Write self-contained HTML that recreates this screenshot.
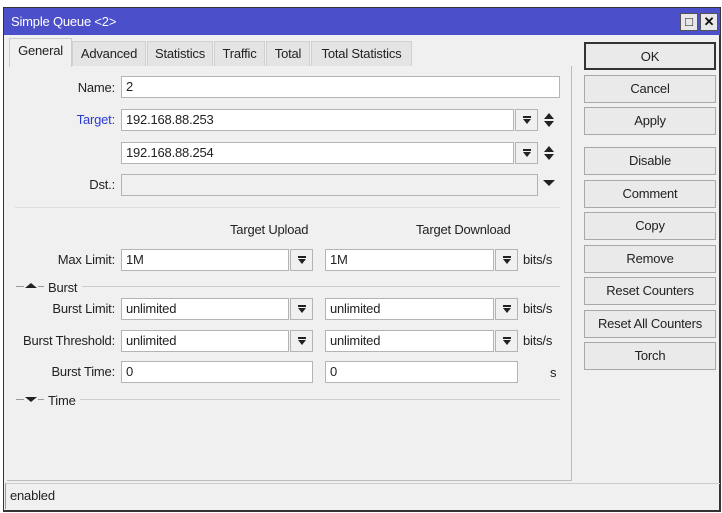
<!DOCTYPE html>
<html><head><meta charset="utf-8"><style>
*{box-sizing:border-box;margin:0;padding:0}
body{width:722px;height:513px;background:#fff;font-family:"Liberation Sans",sans-serif;font-size:13px;letter-spacing:-0.2px;color:#222;position:relative;overflow:hidden}
.a{position:absolute}
.win{left:3px;top:7px;width:718px;height:505px;background:#f0f0f0;border:1px solid #333;border-right:2px solid #333;border-bottom:2px solid #333}
.title{left:4px;top:8px;width:716px;height:27px;background:#4b4fc9;color:#fff;font-size:13px;line-height:27px;padding-left:7px}
.tb{width:18px;height:18px;top:13px;background:#e8e8e8;border:1px solid #555;font-size:13px;line-height:16px;text-align:center;color:#111;font-weight:bold}
.tab{top:41px;height:25px;background:#e4e4e4;border:1px solid #d0d0d0;border-bottom:none;line-height:24px;text-align:center;font-size:13px}
.panel{left:7px;top:66px;width:565px;height:415px;border-right:1px solid #bbb;border-bottom:1px solid #bbb}
.lbl{text-align:right;width:110px;left:5px;line-height:22px}
.in{background:#fff;border:1px solid #b4b4b4;height:22px;line-height:20px;padding-left:4px}
.gr{background:#f0f0f0}
.dd{width:23px;height:22px;border:1px solid #b4b4b4;background:#f0f0f0}
.dd:after{content:"";position:absolute;left:7px;top:6px;width:8px;height:2px;background:#222}
.dd:before{content:"";position:absolute;left:7px;top:9px;border-left:4px solid transparent;border-right:4px solid transparent;border-top:5px solid #222}
.btn{left:584px;width:132px;height:28px;border:1px solid #a8a8a8;background:#eaeaea;text-align:center;line-height:26px;font-size:13px}
.line{height:1px;background:#ccc}
.u{line-height:22px}
</style></head><body>
<div class="a win"></div>
<div class="a title">Simple Queue &lt;2&gt;</div>
<div class="a tb" style="left:680px">&#9633;</div>
<div class="a tb" style="left:700px">✕</div>

<div class="a tab" style="left:9px;top:38px;width:63px;height:29px;background:#f0f0f0;border-color:#ccc">General</div>
<div class="a tab" style="left:72px;width:74px">Advanced</div>
<div class="a tab" style="left:147px;width:66px">Statistics</div>
<div class="a tab" style="left:214px;width:51px">Traffic</div>
<div class="a tab" style="left:266px;width:44px">Total</div>
<div class="a tab" style="left:311px;width:101px">Total Statistics</div>

<div class="a panel"></div>

<div class="a lbl" style="top:77px">Name:</div>
<div class="a in" style="left:121px;top:76px;width:439px">2</div>
<div class="a lbl" style="top:109px;color:#2a3bd0">Target:</div>
<div class="a in" style="left:121px;top:109px;width:393px">192.168.88.253</div>
<div class="a dd" style="left:515px;top:109px"></div>
<svg class="a" style="left:542px;top:112px" width="14" height="16"><path d="M2 7L7 1L12 7Z M2 9L7 15L12 9Z" fill="#222"/></svg>
<div class="a in" style="left:121px;top:142px;width:393px">192.168.88.254</div>
<div class="a dd" style="left:515px;top:142px"></div>
<svg class="a" style="left:542px;top:145px" width="14" height="16"><path d="M2 7L7 1L12 7Z M2 9L7 15L12 9Z" fill="#222"/></svg>
<div class="a lbl" style="top:174px">Dst.:</div>
<div class="a in gr" style="left:121px;top:174px;width:417px"></div>
<svg class="a" style="left:543px;top:179px" width="12" height="8"><path d="M0 1L12 1L6 7Z" fill="#222"/></svg>

<div class="a line" style="left:15px;top:207px;width:545px;background:#ddd"></div>

<div class="a" style="left:230px;top:222px">Target Upload</div>
<div class="a" style="left:416px;top:222px">Target Download</div>

<div class="a lbl" style="top:249px">Max Limit:</div>
<div class="a in" style="left:121px;top:249px;width:168px">1M</div>
<div class="a dd" style="left:290px;top:249px"></div>
<div class="a in" style="left:325px;top:249px;width:169px">1M</div>
<div class="a dd" style="left:495px;top:249px"></div>
<div class="a u" style="left:523px;top:249px">bits/s</div>

<div class="a line" style="left:16px;top:286px;width:8px;background:#999"></div>
<svg class="a" style="left:25px;top:282px" width="12" height="8"><path d="M0 6L12 6L6 1Z" fill="#222"/></svg>
<div class="a line" style="left:38px;top:286px;width:6px;background:#999"></div>
<div class="a" style="left:48px;top:280px">Burst</div>
<div class="a line" style="left:82px;top:286px;width:478px"></div>

<div class="a lbl" style="top:298px">Burst Limit:</div>
<div class="a in" style="left:121px;top:298px;width:168px">unlimited</div>
<div class="a dd" style="left:290px;top:298px"></div>
<div class="a in" style="left:325px;top:298px;width:169px">unlimited</div>
<div class="a dd" style="left:495px;top:298px"></div>
<div class="a u" style="left:523px;top:298px">bits/s</div>

<div class="a lbl" style="top:330px;left:0;width:115px">Burst Threshold:</div>
<div class="a in" style="left:121px;top:330px;width:168px">unlimited</div>
<div class="a dd" style="left:290px;top:330px"></div>
<div class="a in" style="left:325px;top:330px;width:169px">unlimited</div>
<div class="a dd" style="left:495px;top:330px"></div>
<div class="a u" style="left:523px;top:330px">bits/s</div>

<div class="a lbl" style="top:361px">Burst Time:</div>
<div class="a in" style="left:121px;top:361px;width:192px">0</div>
<div class="a in" style="left:325px;top:361px;width:193px">0</div>
<div class="a u" style="left:550px;top:362px">s</div>

<div class="a line" style="left:16px;top:399px;width:8px;background:#999"></div>
<svg class="a" style="left:25px;top:396px" width="12" height="8"><path d="M0 1L12 1L6 6Z" fill="#222"/></svg>
<div class="a line" style="left:38px;top:399px;width:6px;background:#999"></div>
<div class="a" style="left:48px;top:393px">Time</div>
<div class="a line" style="left:80px;top:399px;width:480px"></div>

<div class="a" style="left:5px;top:483px;width:715px;height:26px;border-top:1px solid #ccc;border-left:1px solid #999;line-height:24px;padding-left:4px">enabled</div>

<div class="a btn" style="top:42px;border:2px solid #333">OK</div>
<div class="a btn" style="top:75px">Cancel</div>
<div class="a btn" style="top:107px">Apply</div>
<div class="a btn" style="top:147px">Disable</div>
<div class="a btn" style="top:180px">Comment</div>
<div class="a btn" style="top:212px">Copy</div>
<div class="a btn" style="top:245px">Remove</div>
<div class="a btn" style="top:277px">Reset Counters</div>
<div class="a btn" style="top:310px">Reset All Counters</div>
<div class="a btn" style="top:342px">Torch</div>
</body></html>
